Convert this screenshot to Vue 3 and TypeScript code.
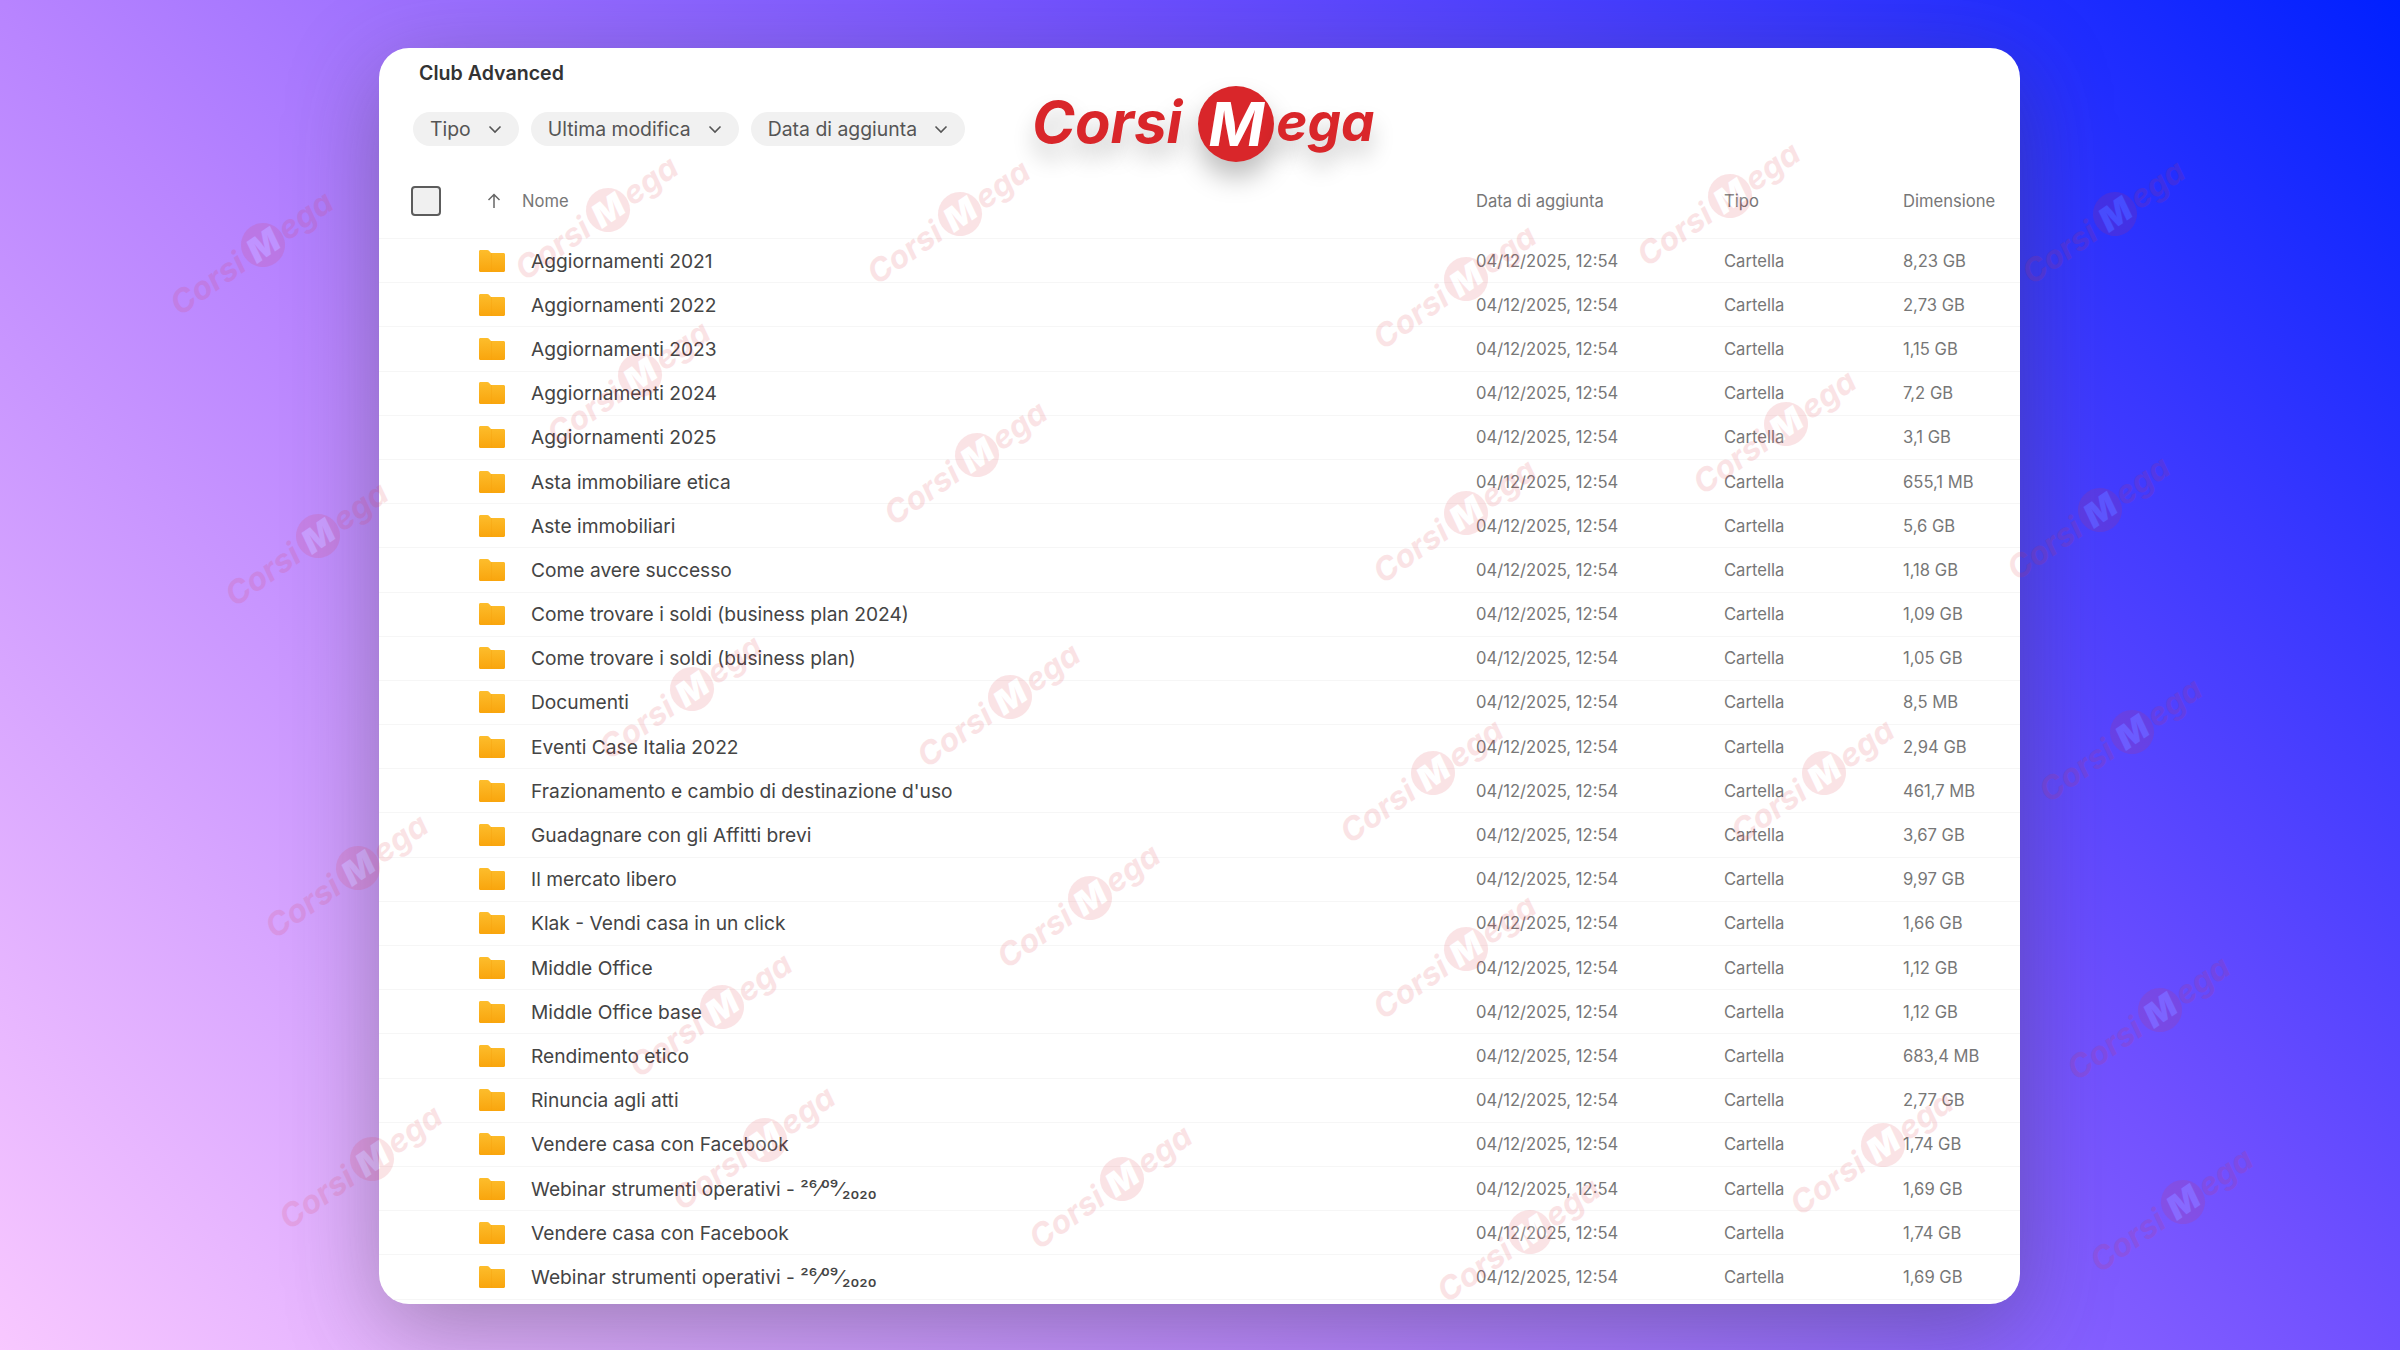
<script setup lang="ts">
const rows: [string, string][] = [
  ["Aggiornamenti 2021", "8,23 GB"],
  ["Aggiornamenti 2022", "2,73 GB"],
  ["Aggiornamenti 2023", "1,15 GB"],
  ["Aggiornamenti 2024", "7,2 GB"],
  ["Aggiornamenti 2025", "3,1 GB"],
  ["Asta immobiliare etica", "655,1 MB"],
  ["Aste immobiliari", "5,6 GB"],
  ["Come avere successo", "1,18 GB"],
  ["Come trovare i soldi (business plan 2024)", "1,09 GB"],
  ["Come trovare i soldi (business plan)", "1,05 GB"],
  ["Documenti", "8,5 MB"],
  ["Eventi Case Italia 2022", "2,94 GB"],
  ["Frazionamento e cambio di destinazione d'uso", "461,7 MB"],
  ["Guadagnare con gli Affitti brevi", "3,67 GB"],
  ["Il mercato libero", "9,97 GB"],
  ["Klak - Vendi casa in un click", "1,66 GB"],
  ["Middle Office", "1,12 GB"],
  ["Middle Office base", "1,12 GB"],
  ["Rendimento etico", "683,4 MB"],
  ["Rinuncia agli atti", "2,77 GB"],
  ["Vendere casa con Facebook", "1,74 GB"],
  ["Webinar strumenti operativi - ²⁶⁄⁰⁹⁄₂₀₂₀", "1,69 GB"],
  ["Vendere casa con Facebook", "1,74 GB"],
  ["Webinar strumenti operativi - ²⁶⁄⁰⁹⁄₂₀₂₀", "1,69 GB"],
];

const filters = ["Tipo", "Ultima modifica", "Data di aggiunta"];

// centre of the M disc of each watermark, in page pixels
const marks: [number, number][] = [
  [263, 245], [318, 536], [358, 868], [372, 1159],
  [2115, 214], [2100, 510], [2132, 732], [2160, 1010], [2183, 1202],
  [608, 210], [960, 214], [1730, 196], [1466, 279],
  [640, 375], [977, 455], [1786, 424], [1466, 513],
  [692, 689], [1010, 697], [1433, 773], [1824, 773],
  [1090, 898], [1466, 949], [722, 1007],
  [765, 1140], [1122, 1179], [1883, 1145], [1530, 1232],
];
</script>

<template>
  <div class="page">
    <main class="card">
      <h1 class="title">Club Advanced</h1>
      <div class="filters">
        <button v-for="f in filters" :key="f" class="chip">
          {{ f }}
          <svg width="14" height="9" viewBox="0 0 14 9" fill="none">
            <path d="M1.500 1.500 7 7l5.500-5.500" stroke="#555" stroke-width="1.600" />
          </svg>
        </button>
      </div>

      <div class="logo">
        <span class="logo-text">Corsi</span>
        <b class="disc">M</b>
        <span class="logo-text logo-end">ega</span>
      </div>

      <div class="head">
        <div class="check-cell"><span class="check"></span></div>
        <div class="sort">
          <svg width="14" height="16" viewBox="0 0 14 16" fill="none">
            <path d="M7 15V1.500M1.500 7 7 1.500 12.500 7" stroke="#666" stroke-width="1.500" />
          </svg>
          <span>Nome</span>
        </div>
        <div>Data di aggiunta</div>
        <div>Tipo</div>
        <div>Dimensione</div>
      </div>

      <div v-for="(r, i) in rows" :key="i" class="row">
        <svg class="folder" width="26" height="22" viewBox="0 0 26 22">
          <defs>
            <linearGradient :id="`f${i}`" x1="0" y1="0" x2="0" y2="1">
              <stop offset="0" stop-color="#fdbd2c" />
              <stop offset="1" stop-color="#f9a50d" />
            </linearGradient>
          </defs>
          <path
            d="M1.500 0h6.500c1 0 1.800.4 2.400 1.200L12 3h12.500c.9 0 1.500.6 1.500 1.500v16c0 .9-.6 1.500-1.500 1.500h-23C.6 22 0 21.400 0 20.500v-19C0 .6.600 0 1.500 0z"
            :fill="`url(#f${i})`"
          />
          <path d="M12 3h1v19h-1z" fill="#f5a00c" opacity=".35" />
        </svg>
        <div class="name">{{ r[0] }}</div>
        <div class="cell">04/12/2025, 12:54</div>
        <div class="cell">Cartella</div>
        <div class="cell">{{ r[1] }}</div>
      </div>
    </main>

    <div class="marks" aria-hidden="true">
      <div
        v-for="(m, i) in marks"
        :key="i"
        class="mark"
        :style="{ left: m[0] + 'px', top: m[1] + 'px' }"
      >
        <span class="mark-l">Corsi</span>
        <b class="mark-disc">M</b>
        <span class="mark-r">ega</span>
      </div>
    </div>
  </div>
</template>

<style>
html,
body {
  margin: 0;
}
</style>

<style scoped>
.page {
  position: relative;
  width: 2400px;
  height: 1350px;
  box-sizing: border-box;
  padding: 48px 380px 46px 379px;
  overflow: hidden;
  font-family: Inter, "Noto Sans", sans-serif;
  background: linear-gradient(
    46deg,
    #f8c8ff 0%,
    #b884ff 35.2%,
    #7050ff 64.8%,
    #3a38ff 82.4%,
    #0020ff 100%
  );
}

.card {
  position: relative;
  height: 100%;
  background: #fff;
  border-radius: 30px;
  box-shadow: 0 24px 90px rgba(60, 60, 60, 0.38);
  overflow: hidden;
}

.title {
  margin: 13px 0 0 40px;
  font-size: 19.600px;
  line-height: 24px;
  font-weight: 600;
  color: #333;
}

.filters {
  display: flex;
  gap: 12px;
  margin: 27px 0 0 34px;
}

.chip {
  display: flex;
  align-items: center;
  gap: 17px;
  height: 34px;
  padding: 0 17px;
  border: 0;
  border-radius: 17px;
  background: #f1f1f1;
  font: 400 19.400px/34px Inter, sans-serif;
  color: #555;
}

.logo {
  position: absolute;
  left: 653px;
  top: 38px;
  display: flex;
  align-items: center;
  font: italic 700 58px/76px Inter, "Liberation Sans", sans-serif;
  color: #d9262a;
}

.logo-text {
  margin-top: -5px;
  text-shadow: 0 14px 22px rgba(0, 0, 0, 0.22);
}

.disc {
  width: 76px;
  height: 76px;
  margin-left: 16px;
  border-radius: 50%;
  background: #d9262a;
  color: #fff;
  font: italic 700 60px/76px Inter, "Liberation Sans", sans-serif;
  text-align: center;
  box-shadow: 0 16px 26px rgba(0, 0, 0, 0.25);
}

.logo-end {
  margin-left: 2px;
  font-size: 53px;
}

.head,
.row {
  display: grid;
  grid-template-columns: 100px 52px 945px 248px 179px 117px;
  align-items: center;
  box-sizing: border-box;
  color: #777;
  font-size: 16.600px;
}

.head {
  height: 76px;
  margin-top: 17px;
  border-bottom: 1px solid #f6f6f6;
}

.check-cell {
  padding-left: 32px;
  display: flex;
}

.check {
  width: 30px;
  height: 30px;
  box-sizing: border-box;
  border: 2px solid #5c5c5c;
  border-radius: 4px;
  background: #f0f0f0;
}

.sort {
  grid-column: 2 / 4;
  display: flex;
  align-items: center;
  gap: 21px;
  padding-left: 8px;
}

.row {
  height: 44.200px;
  border-bottom: 1px solid #f6f6f6;
}

.folder {
  grid-column: 2;
  justify-self: start;
}

.name {
  font-size: 19.200px;
  color: #444;
  white-space: nowrap;
}

.cell {
  font-size: 16.600px;
}

.marks {
  position: absolute;
  inset: 0;
  pointer-events: none;
}

.mark {
  position: absolute;
  width: 0;
  height: 0;
  transform: rotate(-35deg);
  font: italic 700 32px/44px Inter, "Liberation Sans", sans-serif;
  color: #e03040;
  opacity: 0.13;
}

.mark-l,
.mark-r,
.mark-disc {
  position: absolute;
  top: -22px;
  white-space: nowrap;
}

.mark-l {
  right: 26px;
}

.mark-r {
  left: 22px;
}

.mark-disc {
  left: -22px;
  width: 44px;
  height: 44px;
  border-radius: 50%;
  background: #e03040;
  color: #fff;
  font-size: 33px;
  text-align: center;
}
</style>
